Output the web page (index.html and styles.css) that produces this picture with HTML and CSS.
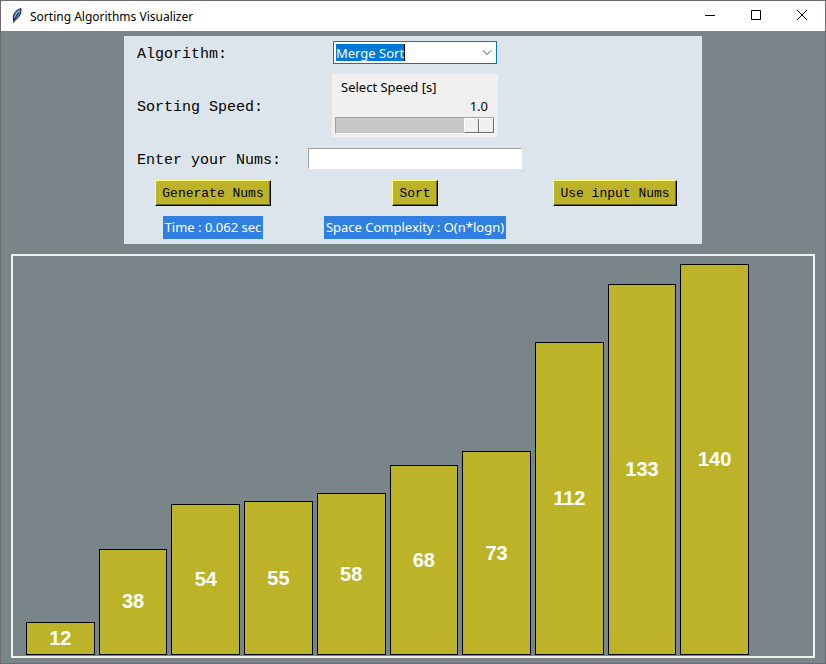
FILE: index.html
```html
<!DOCTYPE html>
<html lang="en">
<head>
<meta charset="utf-8">
<title>Sorting Algorithms Visualizer</title>
<link rel="stylesheet" href="styles.css">
</head>
<body>
<div class="window">
  <header class="titlebar">
    <svg class="feather" width="12" height="18" viewBox="0 0 12 18" aria-hidden="true">
      <path d="M10 1.500C6 2.500 3 5.500 2.300 9.500L2.600 13.500 4.500 13C7.500 10.500 9.500 8 9.800 5.500L10 1.500Z" fill="#4c86c6" stroke="#18202c" stroke-width="1"/>
      <path d="M8.500 3C6 5 4.500 8 4 11" fill="none" stroke="#a9cdf0" stroke-width="1"/>
      <path d="M7.500 6C5 9 3.500 12 2.500 16" fill="none" stroke="#111" stroke-width="1"/>
    </svg>
    <h1 class="title">Sorting Algorithms Visualizer</h1>
    <div class="controls">
      <button class="control" type="button" aria-label="Minimize"><svg width="12" height="12" viewBox="0 0 12 12"><path d="M1 5.500H11" stroke="#000" fill="none"/></svg></button>
      <button class="control" type="button" aria-label="Maximize"><svg width="12" height="12" viewBox="0 0 12 12"><path d="M1.500 0.500H10.500V9.500H1.500Z" stroke="#000" fill="none"/></svg></button>
      <button class="control" type="button" aria-label="Close"><svg width="12" height="12" viewBox="0 0 12 12"><path d="M1 0L11 10M11 0L1 10" stroke="#000" fill="none"/></svg></button>
    </div>
  </header>
  <main class="content">
    <form class="panel">
      <label class="label" for="algorithm">Algorithm:</label>
      <div class="combo">
        <select class="combo-select" id="algorithm"><option>Merge Sort</option></select>
        <svg class="chevron" width="10" height="6" viewBox="0 0 10 6" aria-hidden="true"><path d="M1 0.500L5 4.500L9 0.500" fill="none" stroke="#444"/></svg>
      </div>
      <span></span>

      <label class="label" for="speed">Sorting Speed:</label>
      <div class="scale">
        <span class="scale-title">Select Speed [s]</span>
        <output class="scale-value" for="speed">1.0</output>
        <input class="slider" id="speed" type="range" min="0.1" max="1" step="0.1" value="1" aria-label="Select Speed [s]">
      </div>
      <span></span>

      <label class="label" for="nums">Enter your Nums:</label>
      <input class="entry" id="nums" type="text">
      <span></span>

      <button class="button" type="button">Generate Nums</button>
      <button class="button" type="button">Sort</button>
      <button class="button" type="button">Use input Nums</button>

      <span class="status">Time : 0.062 sec</span>
      <span class="status">Space Complexity : O(n*logn)</span>
      <span></span>
    </form>
    <section class="chart" aria-label="Values">
      <div class="bar" style="--n:12">12</div>
      <div class="bar" style="--n:38">38</div>
      <div class="bar" style="--n:54">54</div>
      <div class="bar" style="--n:55">55</div>
      <div class="bar" style="--n:58">58</div>
      <div class="bar" style="--n:68">68</div>
      <div class="bar" style="--n:73">73</div>
      <div class="bar" style="--n:112">112</div>
      <div class="bar" style="--n:133">133</div>
      <div class="bar" style="--n:140">140</div>
    </section>
  </main>
</div>
</body>
</html>
```
FILE: styles.css
```css
* {
  box-sizing: border-box;
}

body {
  margin: 0;
  font-family: "Noto Sans", sans-serif;
  font-size: 13px;
  color: #000;
}

.window {
  display: flex;
  flex-direction: column;
  height: 100vh;
  border: 1px solid #6d6b6c;
  background: #7a858a;
}

.titlebar {
  display: flex;
  flex: none;
  align-items: center;
  height: 30px;
  padding-left: 10px;
  background: #fff;
}

.title {
  margin: 0 auto 0 7px;
  font-size: 12px;
  font-weight: 400;
}

.controls {
  display: flex;
}

.control {
  display: flex;
  align-items: center;
  justify-content: center;
  width: 46px;
  height: 30px;
  padding: 0;
  border: 0;
  background: none;
}

.content {
  display: flex;
  flex: 1;
  flex-direction: column;
  gap: 10px;
  padding: 5px 10px;
}

.panel {
  display: grid;
  grid-template-columns: 178px 226px 174px;
  grid-template-rows: 33px 73px 33px 36px 33px;
  align-items: center;
  justify-items: center;
  align-self: center;
  background: #dde5ec;
}

.label {
  justify-self: start;
  padding: 3px 0 0 13px;
  font-family: "Liberation Mono", monospace;
  font-size: 15px;
  white-space: nowrap;
}

.combo {
  position: relative;
  width: 164px;
}

.combo-select {
  display: block;
  width: 100%;
  height: 23px;
  padding: 0 2px;
  border: 1px solid #0078d7;
  border-radius: 0;
  appearance: none;
  background: linear-gradient(#0078d7, #0078d7) 2px 2px / 68px 17px no-repeat,
    linear-gradient(#000, #000) 70px 2px / 1px 17px no-repeat, #fff;
  font: inherit;
  color: #fff;
}

.combo-select option {
  color: #000;
}

.chevron {
  position: absolute;
  top: 9px;
  right: 5px;
  pointer-events: none;
}

.scale {
  display: flex;
  flex-direction: column;
  width: 166px;
  height: 63px;
  padding: 4px 3px 3px;
  background: #f0f0f0;
}

.scale-title {
  padding-left: 6px;
  line-height: 19px;
}

.scale-value {
  padding-right: 7px;
  line-height: 19px;
  text-align: right;
}

.slider {
  display: block;
  width: 100%;
  height: 17px;
  margin: 1px 0 0;
  border: 1px solid;
  border-color: #a0a0a0 #fff #fff #a0a0a0;
  appearance: none;
  background: #c8c8c8;
}

.slider::-webkit-slider-thumb {
  width: 30px;
  height: 15px;
  border: 1px solid;
  border-color: #fff #696969 #696969 #fff;
  appearance: none;
  background: linear-gradient(90deg, #696969 1px, #fff 1px) 13px 0 / 2px 100% no-repeat, #f0f0f0;
}

.entry {
  width: 214px;
  height: 21px;
  padding: 0 2px;
  border: 1px solid;
  border-color: #a0a0a0 #fff #fff #a0a0a0;
  background: #fff;
  font: inherit;
}

.button {
  height: 26px;
  padding: 0 6px;
  border: 1px solid;
  border-color: #ffff80 #000 #000 #ffff80;
  box-shadow: inset -1px -1px #6f6a18;
  background: #bcb328;
  font-family: "Liberation Mono", monospace;
  font-size: 13px;
  color: #000;
}

.status {
  padding: 0 2px;
  background: #3080e4;
  line-height: 23px;
  color: #fff;
  white-space: nowrap;
}

.chart {
  display: flex;
  flex: 1;
  align-items: flex-end;
  gap: 4px;
  padding: 8px 64px 1px 13px;
  border: 2px solid #f0f0f0;
}

.bar {
  display: flex;
  flex: 1;
  align-items: center;
  justify-content: center;
  height: calc(var(--n) / 140 * 100%);
  border: 1px solid #000;
  background: #bcb328;
  font-family: "Liberation Sans", sans-serif;
  font-size: 20px;
  font-weight: 700;
  color: #fff;
}
```
